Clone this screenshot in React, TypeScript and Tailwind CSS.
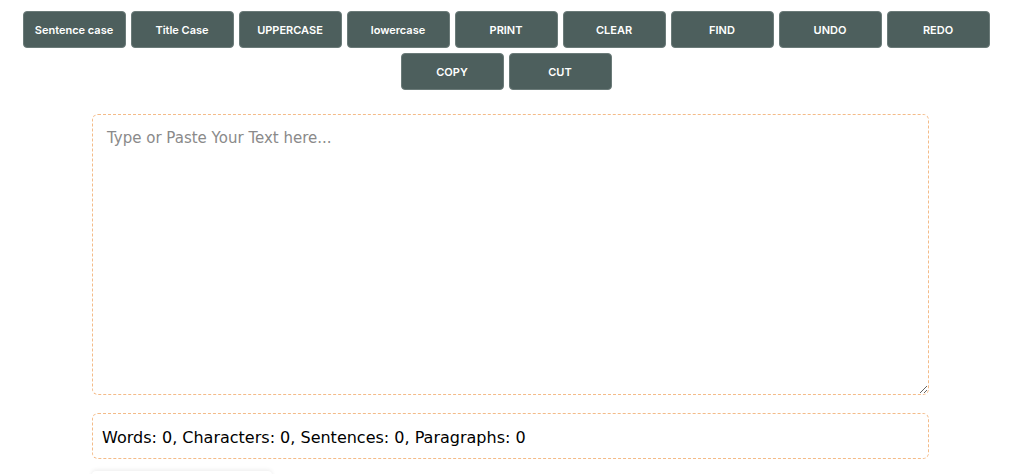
import { useState } from 'react';

const buttons = [
  'Sentence case',
  'Title Case',
  'UPPERCASE',
  'lowercase',
  'PRINT',
  'CLEAR',
  'FIND',
  'UNDO',
  'REDO',
  'COPY',
  'CUT',
];

export default function App() {
  const [text, setText] = useState('');

  const words = text.trim() ? text.trim().split(/\s+/).length : 0;
  const sentences = text.split(/[.!?]+/).filter((s) => s.trim()).length;
  const paragraphs = text.split(/\n+/).filter((p) => p.trim()).length;

  return (
    <div className="h-[474px] overflow-hidden bg-white">
      <div className="flex flex-wrap justify-center gap-[5px] pt-[11px] pr-[12px]">
        {buttons.map((label) => (
          <button
            key={label}
            className="h-[37px] w-[103px] rounded-[4px] border border-[#6b7b79] bg-[#4d5f5d] pt-[2px] font-['Inter',sans-serif] text-[11px] font-semibold text-white"
          >
            {label}
          </button>
        ))}
      </div>

      <div className="mt-[24px] mr-[95px] ml-[92px]">
        <textarea
          value={text}
          onChange={(e) => setText(e.target.value)}
          placeholder="Type or Paste Your Text here..."
          className="block h-[281px] w-full rounded-[6px] border border-dashed border-[#f4bb88] px-[14px] py-[12px] font-['DejaVu_Sans',sans-serif] text-[15px] text-black outline-none placeholder:text-[#8a8a8a]"
        />

        <div className="mt-[18px] flex h-[46px] items-center rounded-[6px] border border-dashed border-[#f4bb88] px-[9px] pt-[3px] font-['DejaVu_Sans',sans-serif] text-[16px] text-black">
          Words: {words}, Characters: {text.length}, Sentences: {sentences}, Paragraphs: {paragraphs}
        </div>

        <div className="mt-[12px] h-[10px] w-[180px] rounded-t-[4px] bg-white shadow-[0_-1px_4px_rgba(0,0,0,0.08)]" />
      </div>
    </div>
  );
}
